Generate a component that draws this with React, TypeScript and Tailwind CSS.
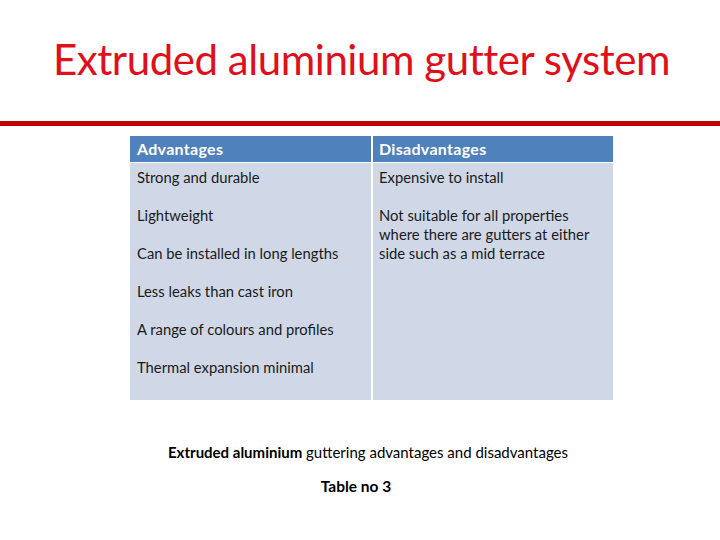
import React from "react";

const font = { fontFamily: "Lato, 'Open Sans', sans-serif" };

export default function App() {
  return (
    <div className="w-[720px] h-[540px] bg-white overflow-hidden flex flex-col" style={font}>
      <div className="h-[121px] flex justify-center pt-[34px]">
        <h1 className="text-[42px] leading-[50px] text-[#e0101a] tracking-[-0.45px] font-normal pl-[3px]">
          Extruded aluminium gutter system
        </h1>
      </div>
      <div className="h-[5px] w-full bg-[#c00000]" />
      <div className="pl-[130px] pt-[10px]">
        <div className="grid grid-cols-[241px_240px] gap-x-[2px] gap-y-[1px] w-[483px] text-[14.8px] leading-[19px] text-[#1a1a1a]">
          <div className="bg-[#4f81bd] h-[26px] flex items-center px-[7px] pb-[1px] text-white font-bold text-[16px] tracking-[0.3px]">Advantages</div>
          <div className="bg-[#4f81bd] h-[26px] flex items-center px-[6px] pb-[1px] text-white font-bold text-[16px] tracking-[0.3px]">Disadvantages</div>
          <div className="bg-[#d0d8e8] h-[237px] pt-[5px] px-[7px] flex flex-col gap-[19px]">
            <p>Strong and durable</p>
            <p>Lightweight</p>
            <p>Can be installed in long lengths</p>
            <p>Less leaks than cast iron</p>
            <p>A range of colours and profiles</p>
            <p>Thermal expansion minimal</p>
          </div>
          <div className="bg-[#d0d8e8] h-[237px] pt-[5px] px-[6px] flex flex-col gap-[19px]">
            <p>Expensive to install</p>
            <p>Not suitable for all properties where there are gutters at either side such as a mid terrace</p>
          </div>
        </div>
      </div>
      <div className="flex flex-col items-center text-[15px] leading-[19px] text-black pt-[43px]">
        <p className="pl-[16px]"><span className="font-bold">Extruded aluminium</span> guttering advantages and disadvantages</p>
        <p className="font-bold mt-[15px] pr-[8px] text-[15.5px]">Table no 3</p>
      </div>
    </div>
  );
}
